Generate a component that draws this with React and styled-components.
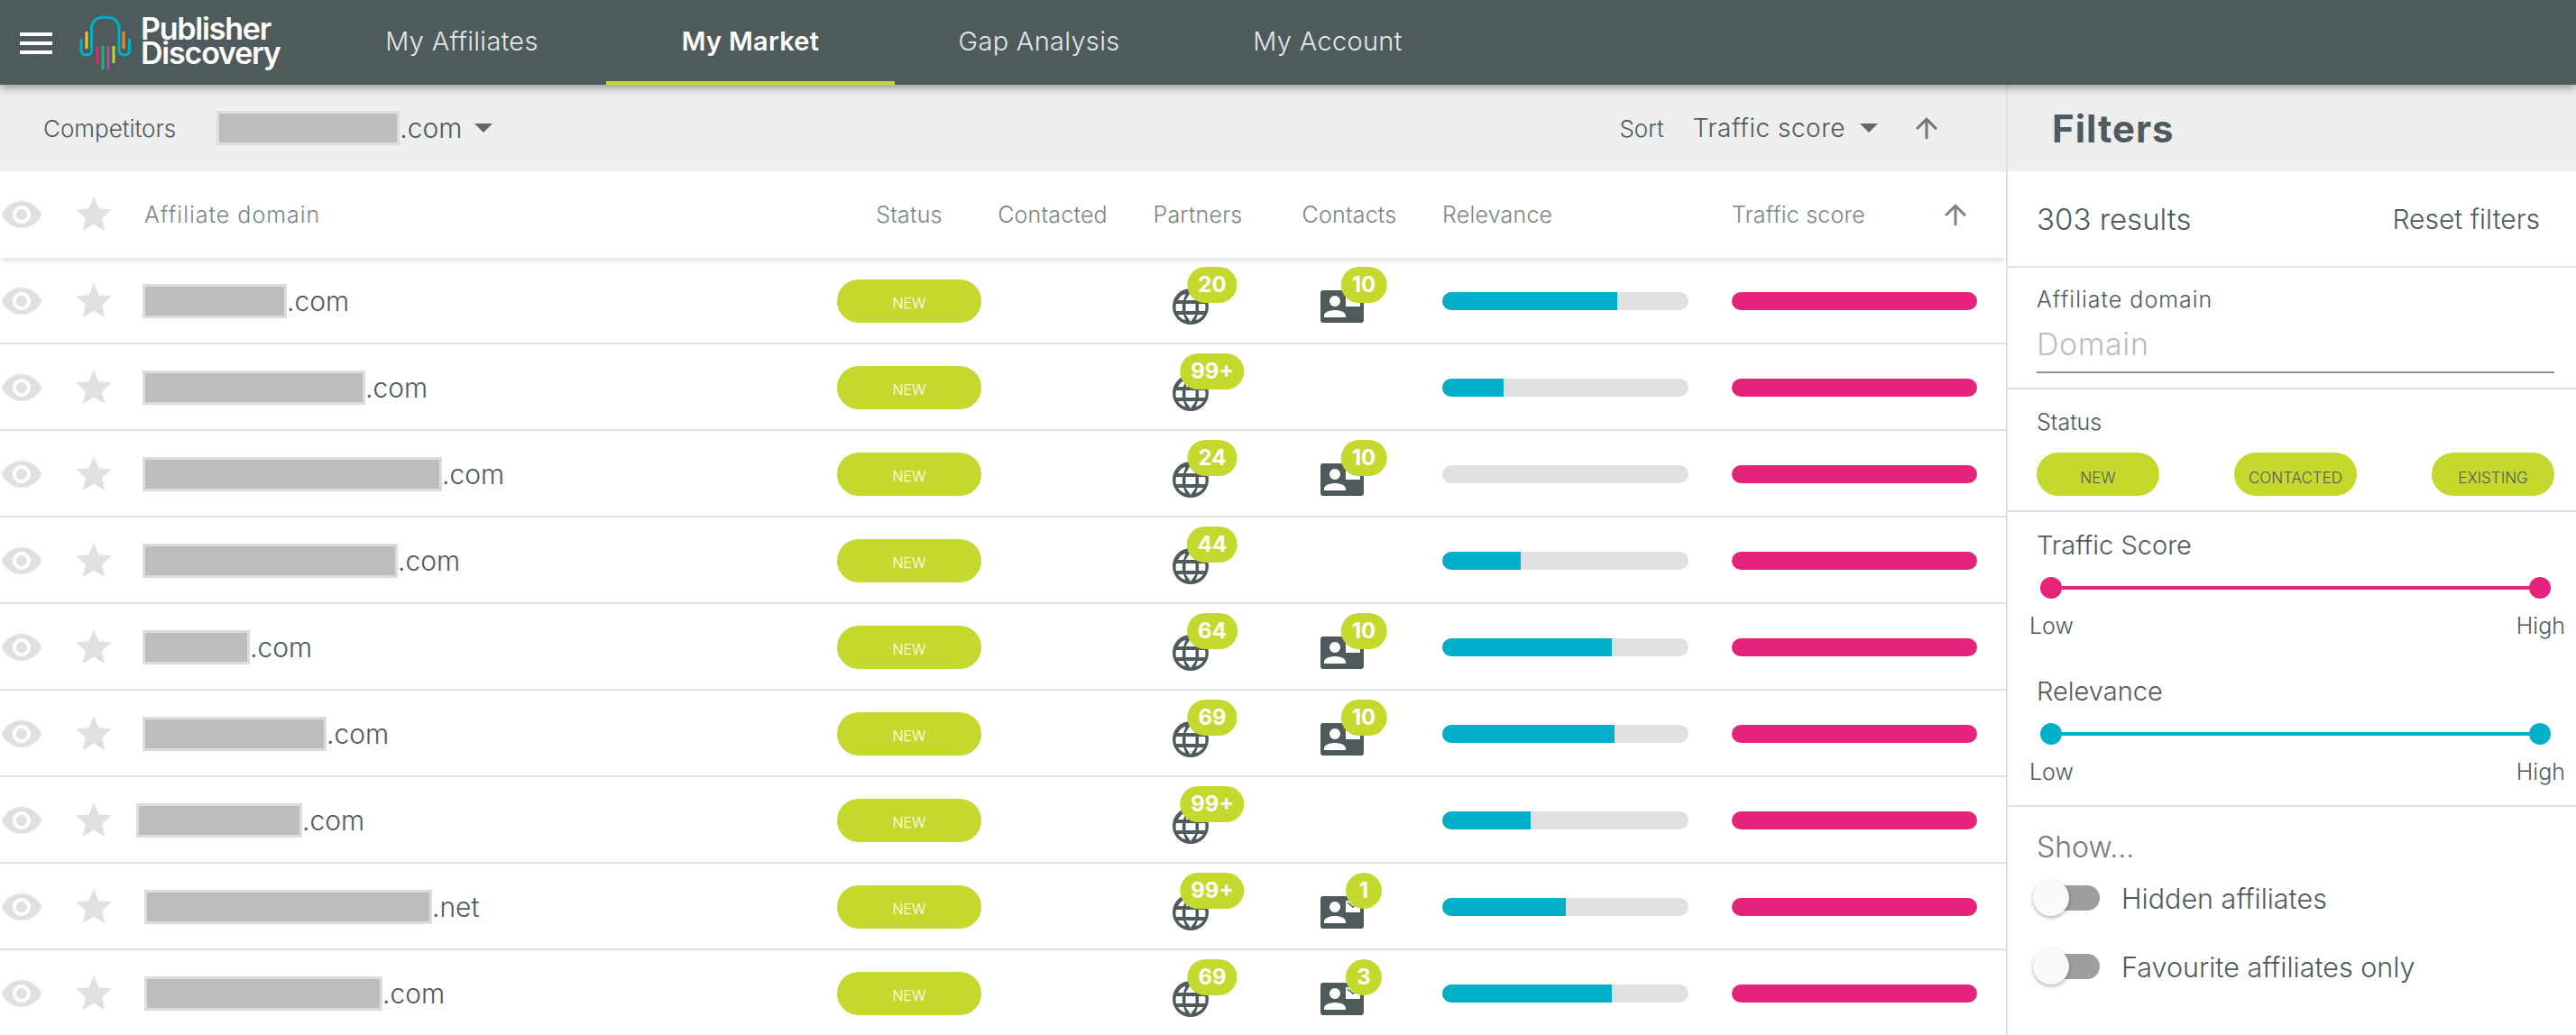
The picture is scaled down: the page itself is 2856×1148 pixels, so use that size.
import React from 'react'
import styled, { createGlobalStyle } from 'styled-components'
import { MdVisibility, MdStar, MdArrowUpward } from 'react-icons/md'

const DARK = '#4f5a5c'
const LIME = '#c5d82e'
const PINK = '#e6237a'
const CYAN = '#00afc8'
const LINE = '#e0e0e0'

const rows = [
  { blur: 160, tld: '.com', partners: '20', contacts: '10', relevance: 71 },
  { blur: 247, tld: '.com', partners: '99+', relevance: 25 },
  { blur: 332, tld: '.com', partners: '24', contacts: '10', relevance: 0 },
  { blur: 283, tld: '.com', partners: '44', relevance: 32 },
  { blur: 119, tld: '.com', partners: '64', contacts: '10', relevance: 69 },
  { blur: 204, tld: '.com', partners: '69', contacts: '10', relevance: 70 },
  { blur: 184, shift: -7, tld: '.com', partners: '99+', relevance: 36 },
  { blur: 319, shift: 2, tld: '.net', partners: '99+', contacts: '1', relevance: 50 },
  { blur: 264, shift: 2, tld: '.com', partners: '69', contacts: '3', relevance: 69 },
]

const GlobeIcon = () => (
  <svg width="40" height="40" viewBox="0 0 40 40">
    <circle cx="20" cy="20" r="20" fill={DARK} />
    <path
      fill="#fff"
      d="M4 17h7v8H4q-.5-2-.5-4t.5-4zM14.500 17h11v8h-11zM29 17h7q.5 2 .5 4t-.5 4h-7zM14.500 29h11L20 37zM6 29h6l2.500 6Q9 34 6 29zM34 29h-6l-2.500 6Q31 34 34 29zM14.500 13h11L20 4zM6 13h6l2.500-7Q9 7 6 13zM34 13h-6l-2.500-7Q31 7 34 13z"
    />
  </svg>
)

const ContactIcon = () => (
  <svg width="48" height="36" viewBox="0 0 48 36">
    <rect width="48" height="36" rx="3" fill={DARK} />
    <circle cx="16" cy="12" r="6" fill="#fff" />
    <path d="M4 30v-2c0-4 7-6 12-6s12 2 12 6v2z" fill="#fff" />
    <rect x="28" y="5" width="16" height="13" fill="#fff" />
    <path d="M30 7l6 5 6-5" fill="none" stroke={DARK} strokeWidth="1.5" />
  </svg>
)

const Logo = () => (
  <svg width="58" height="62" viewBox="0 0 58 62">
    <path
      d="M2 26v12q0 6 6 6t5.500-6V15Q13.500 2 28.500 2T44 15v23q0 6 6 6t5.500-6V26"
      fill="none"
      stroke="#00afc8"
      strokeWidth="3"
    />
    <g fill="none" strokeWidth="3">
      <path d="M8 18v19" stroke="#f5c431" />
      <path d="M49 18v19" stroke="#f08a2c" />
      <path d="M20 34v19" stroke="#e6237a" />
      <path d="M26 34v26" stroke="#1fb36b" />
      <path d="M32 34v26" stroke="#9b59a8" />
      <path d="M38 34v19" stroke="#c5d82e" />
    </g>
  </svg>
)

const App = () => {
  return (
    <Page>
      <GlobalStyle />
      <TopBar>
        <Brand>
          <Burger>
            <span />
            <span />
            <span />
          </Burger>
          <Logo />
          <BrandName>
            Publisher
            <br />
            Discovery
          </BrandName>
        </Brand>
        <Tab>My Affiliates</Tab>
        <Tab $active>My Market</Tab>
        <Tab>Gap Analysis</Tab>
        <Tab>My Account</Tab>
      </TopBar>
      <Body>
        <Main>
          <SubBar>
            <SubLabel>Competitors</SubLabel>
            <Competitor>
              <Blur $width={203} />
              .com
            </Competitor>
            <CompetitorCaret />
            <SortGroup>
              <SubLabel>Sort</SubLabel>
              <SortValue>Traffic score</SortValue>
              <Caret />
              <SortArrow>
                <MdArrowUpward size={36} />
              </SortArrow>
            </SortGroup>
          </SubBar>
          <TableHead>
            <IconCell>
              <MdVisibility size={48} />
            </IconCell>
            <IconCell>
              <MdStar size={48} />
            </IconCell>
            <DomainHead>Affiliate domain</DomainHead>
            <HeadCell $center>Status</HeadCell>
            <HeadCell $center>Contacted</HeadCell>
            <HeadCell $center>Partners</HeadCell>
            <HeadCell $center>Contacts</HeadCell>
            <RelevanceHead>Relevance</RelevanceHead>
            <TrafficHead>
              Traffic score
              <MdArrowUpward size={36} />
            </TrafficHead>
          </TableHead>
          {rows.map((row, i) => (
            <Row key={i}>
              <IconCell>
                <MdVisibility size={48} />
              </IconCell>
              <IconCell>
                <MdStar size={48} />
              </IconCell>
              <Domain>
                <Blur $width={row.blur} $shift={row.shift} />
                {row.tld}
              </Domain>
              <Pill>NEW</Pill>
              <span />
              <BadgeCell>
                <IconWrap>
                  <GlobeIcon />
                  <Badge $left={44} $top={-24}>
                    {row.partners}
                  </Badge>
                </IconWrap>
              </BadgeCell>
              <BadgeCell>
                {row.contacts && (
                  <IconWrap>
                    <ContactIcon />
                    <Badge $left={48} $top={-26}>
                      {row.contacts}
                    </Badge>
                  </IconWrap>
                )}
              </BadgeCell>
              <BarCell>
                <Bar>
                  <BarFill $color={CYAN} style={{ width: `${row.relevance}%` }} />
                </Bar>
              </BarCell>
              <Bar $wide>
                <BarFill $color={PINK} style={{ width: '100%' }} />
              </Bar>
            </Row>
          ))}
        </Main>
        <Sidebar>
          <SideTitle>Filters</SideTitle>
          <Results>
            <ResultCount>303 results</ResultCount>
            <ResetLink>Reset filters</ResetLink>
          </Results>
          <DomainSection>
            <DomainLabel>Affiliate domain</DomainLabel>
            <FakeInput>Domain</FakeInput>
          </DomainSection>
          <StatusSection>
            <FieldLabel>Status</FieldLabel>
            <StatusPills>
              <StatusPill>NEW</StatusPill>
              <StatusPill>CONTACTED</StatusPill>
              <StatusPill>EXISTING</StatusPill>
            </StatusPills>
          </StatusSection>
          <SliderSection>
            <SliderTitle>Traffic Score</SliderTitle>
            <Slider $color={PINK}>
              <i />
              <b />
              <i />
            </Slider>
            <SliderLabels>
              <span>Low</span>
              <span>High</span>
            </SliderLabels>
            <SliderTitle $second>Relevance</SliderTitle>
            <Slider $color={CYAN}>
              <i />
              <b />
              <i />
            </Slider>
            <SliderLabels>
              <span>Low</span>
              <span>High</span>
            </SliderLabels>
          </SliderSection>
          <ShowSection>
            <ShowTitle>Show...</ShowTitle>
            <ToggleRow>
              <Track />
              Hidden affiliates
            </ToggleRow>
            <ToggleRow $second>
              <Track />
              Favourite affiliates only
            </ToggleRow>
          </ShowSection>
        </Sidebar>
      </Body>
    </Page>
  )
}

const GlobalStyle = createGlobalStyle`
  * {
    box-sizing: border-box;
  }
  body {
    margin: 0;
    background: #fff;
    font-family: Inter, "Liberation Sans", sans-serif;
    font-weight: 300;
    color: ${DARK};
  }
`

const Page = styled.div`
  width: 2856px;
  height: 1148px;
  overflow: hidden;
`

const TopBar = styled.header`
  position: relative;
  z-index: 2;
  display: flex;
  height: 94px;
  background: ${DARK};
  box-shadow: 0 3px 10px rgba(0, 0, 0, 0.4);
`

const Brand = styled.div`
  display: flex;
  align-items: center;
  width: 352px;
  padding-left: 22px;
  padding-top: 1px;
`

const Burger = styled.div`
  display: flex;
  flex-direction: column;
  justify-content: space-between;
  width: 36px;
  height: 24px;
  margin-right: 30px;

  span {
    height: 4px;
    background: #fff;
  }
`

const BrandName = styled.div`
  margin-left: 10px;
  margin-top: -5px;
  font-size: 34px;
  line-height: 27px;
  font-weight: 600;
  letter-spacing: -1.2px;
  color: #fff;
`

const Tab = styled.div`
  display: flex;
  align-items: center;
  justify-content: center;
  width: 320px;
  height: 94px;
  font-size: 29px;
  letter-spacing: 0.3px;
  color: ${(p) => (p.$active ? '#fff' : '#e4e8e8')};
  font-weight: ${(p) => (p.$active ? 600 : 300)};
  border-bottom: 4px solid ${(p) => (p.$active ? LIME : 'transparent')};
`

const Body = styled.div`
  display: flex;
  height: 1054px;
`

const Main = styled.main`
  width: 2224px;
  flex: none;
`

const SubBar = styled.div`
  display: flex;
  align-items: center;
  height: 96px;
  padding: 0 70px 0 48px;
  background: #eee;
`

const SubLabel = styled.span`
  font-size: 26px;
`

const Competitor = styled.span`
  display: flex;
  align-items: center;
  margin-left: 45px;
  font-size: 30px;
`

const Caret = styled.span`
  width: 0;
  height: 0;
  margin-left: 16px;
  border-left: 10px solid transparent;
  border-right: 10px solid transparent;
  border-top: 10px solid #666;
`

const CompetitorCaret = styled(Caret)`
  margin-left: 13px;
`

const SortGroup = styled.div`
  display: flex;
  align-items: center;
  margin-left: auto;
`

const SortValue = styled.span`
  margin-left: 32px;
  font-size: 28px;
  letter-spacing: 0.5px;
`

const SortArrow = styled.span`
  display: flex;
  margin-left: 36px;
  color: #757575;
`

const tableColumns = '80px 78px 770px 160px 158px 164px 172px 338px 1fr'

const TableHead = styled.div`
  position: relative;
  z-index: 1;
  display: grid;
  grid-template-columns: ${tableColumns};
  align-items: center;
  height: 96px;
  background: #fff;
  box-shadow: 0 5px 6px -2px rgba(0, 0, 0, 0.14);
`

const IconCell = styled.div`
  display: flex;
  color: ${LINE};
`

const HeadCell = styled.div`
  font-size: 25px;
  letter-spacing: 0.2px;
  color: #7b8587;
  text-align: ${(p) => (p.$center ? 'center' : 'left')};
`

const DomainHead = styled(HeadCell)`
  padding-left: 2px;
  letter-spacing: 1px;
`

const RelevanceHead = styled(HeadCell)`
  padding-left: 17px;
`

const TrafficHead = styled(HeadCell)`
  display: flex;
  align-items: center;
  justify-content: space-between;
  width: 266px;
`

const Row = styled.div`
  display: grid;
  grid-template-columns: ${tableColumns};
  align-items: center;
  height: 96px;
  padding-top: 2px;
  border-bottom: 2px solid ${LINE};
`

const Domain = styled.div`
  display: flex;
  align-items: center;
  font-size: 30px;
`

const Blur = styled.span`
  flex: none;
  width: ${(p) => p.$width}px;
  height: 38px;
  margin-left: ${(p) => p.$shift || 0}px;
  background: #bdbdbd;
  border: 3px solid #dcdcdc;
`

const Pill = styled.div`
  display: flex;
  align-items: center;
  justify-content: center;
  width: 160px;
  height: 48px;
  padding-top: 4px;
  border-radius: 24px;
  background: ${LIME};
  font-size: 16px;
  color: #fff;
`

const BadgeCell = styled.div`
  display: flex;
  padding: 12px 0 0 54px;
`

const IconWrap = styled.div`
  position: relative;
  display: flex;
`

const Badge = styled.span`
  position: absolute;
  left: ${(p) => p.$left}px;
  top: ${(p) => p.$top}px;
  transform: translateX(-50%);
  min-width: 40px;
  height: 40px;
  padding: 0 12px;
  border-radius: 20px;
  background: ${LIME};
  color: #fff;
  font-size: 24px;
  font-weight: 700;
  line-height: 40px;
  text-align: center;
`

const BarCell = styled.div`
  padding-left: 17px;
`

const Bar = styled.div`
  width: ${(p) => (p.$wide ? 272 : 273)}px;
  height: 20px;
  border-radius: 10px;
  overflow: hidden;
  background: ${LINE};
`

const BarFill = styled.div`
  height: 100%;
  background: ${(p) => p.$color};
`

const Sidebar = styled.aside`
  flex: 1;
  border-left: 2px solid ${LINE};
`

const SideTitle = styled.h2`
  display: flex;
  align-items: center;
  height: 96px;
  margin: 0;
  padding-left: 49px;
  background: #eee;
  font-size: 42px;
  font-weight: 700;
  letter-spacing: 1px;
`

const Results = styled.div`
  display: flex;
  align-items: center;
  justify-content: space-between;
  height: 107px;
  padding: 0 40px 0 32px;
  border-bottom: 2px solid ${LINE};
`

const ResultCount = styled.span`
  font-size: 33px;
`

const ResetLink = styled.span`
  font-size: 30px;
`

const Section = styled.section`
  padding: 0 24px 0 32px;
  border-bottom: 2px solid ${LINE};
`

const DomainSection = styled(Section)`
  height: 135px;
  padding-top: 20px;
`

const FieldLabel = styled.div`
  font-size: 25px;
  line-height: 30px;
`

const DomainLabel = styled(FieldLabel)`
  letter-spacing: 1px;
`

const FakeInput = styled.div`
  height: 67px;
  padding-top: 15px;
  border-bottom: 2px solid #8e8e8e;
  font-size: 34px;
  letter-spacing: 0.6px;
  line-height: 40px;
  color: #b8bdbd;
`

const StatusSection = styled(Section)`
  height: 136px;
  padding-top: 21px;
`

const StatusPills = styled.div`
  display: flex;
  justify-content: space-between;
  margin-top: 19px;
`

const StatusPill = styled(Pill)`
  width: 136px;
  padding-top: 8px;
  font-size: 17px;
  color: ${DARK};
`

const SliderSection = styled(Section)`
  padding-top: 19px;
  padding-bottom: 22px;
`

const SliderTitle = styled.div`
  margin-top: ${(p) => (p.$second ? 40 : 0)}px;
  font-size: 29px;
  line-height: 36px;
`

const Slider = styled.div`
  display: flex;
  align-items: center;
  margin: 17px 4px 0;

  i {
    width: 24px;
    height: 24px;
    border-radius: 50%;
    background: ${(p) => p.$color};
  }

  b {
    flex: 1;
    height: 4px;
    background: ${(p) => p.$color};
  }
`

const SliderLabels = styled.div`
  display: flex;
  justify-content: space-between;
  margin: 15px -12px 0 -8px;
  font-size: 25px;
  line-height: 30px;
`

const ShowSection = styled.section`
  padding: 25px 24px 0 32px;
`

const ShowTitle = styled.div`
  font-size: 32px;
  line-height: 40px;
  color: #6f7a7c;
`

const ToggleRow = styled.div`
  display: flex;
  align-items: center;
  height: 40px;
  margin-top: ${(p) => (p.$second ? 36 : 16)}px;
  font-size: 30.500px;
`

const Track = styled.span`
  position: relative;
  width: 70px;
  height: 28px;
  margin-right: 24px;
  border-radius: 14px;
  background: #9e9e9e;

  &::before {
    content: '';
    position: absolute;
    left: -4px;
    top: -6px;
    width: 40px;
    height: 40px;
    border-radius: 50%;
    background: #fafafa;
    box-shadow: 0 2px 4px rgba(0, 0, 0, 0.3);
  }
`

export default App
